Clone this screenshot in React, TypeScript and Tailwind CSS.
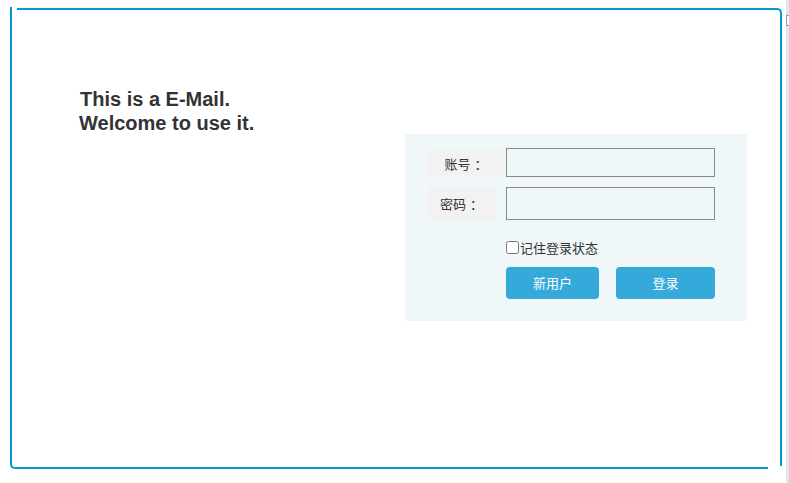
import { useState } from 'react';

// Login page: welcome text on the left, login panel on the right
export default function App() {
    const [remember, setRemember] = useState(false);
    const [account, setAccount] = useState('');
    const [password, setPassword] = useState('');

    return (
        <div className="flex w-[789px] h-[483px] bg-white font-['Liberation_Sans','Noto_Sans_CJK_SC',sans-serif] text-[#333]">
            <div className="relative w-[786px] h-[483px]">
                {/* frame lines (two offset halves) */}
                <div className="pointer-events-none absolute left-[10px] top-[7px] w-[758px] h-[462px] border-l-2 border-b-2 border-[#0599ce] rounded-bl-[5px]" />
                <div className="pointer-events-none absolute left-[17px] top-[8px] w-[765px] h-[458px] border-t-2 border-r-2 border-[#0599ce] rounded-tr-[5px]" />

                <div className="pt-[87px]">
                    <h1 className="h-[47px] pl-[79px] text-[20px] leading-[24px] font-bold">
                        <span className="pl-[1px]">This is a E-Mail.</span>
                        <br />
                        Welcome to use it.
                    </h1>

                    {/* login panel */}
                    <div className="ml-[405px] w-[342px] h-[187px] bg-[#eff7f9] pt-[14px] pl-[22px] text-[13px] font-['Noto_Sans_CJK_SC',sans-serif]">
                        <div className="flex items-end">
                            <label className="flex items-center justify-center w-[78px] h-[27px] bg-[#f2f2f2]">
                                账号<span className="ml-[4px]">：</span>
                            </label>
                            <input
                                value={account}
                                onChange={(e) => setAccount(e.target.value)}
                                className="ml-[1px] w-[209px] h-[29px] border border-[#888] bg-[#eff7f9] outline-none px-1"
                            />
                        </div>
                        <div className="flex items-end mt-[10px]">
                            <label className="flex items-center justify-center w-[69px] h-[33px] bg-[#f2f2f2]">
                                密码<span className="ml-[4px]">：</span>
                            </label>
                            <input
                                type="password"
                                value={password}
                                onChange={(e) => setPassword(e.target.value)}
                                className="ml-[10px] w-[209px] h-[33px] border border-[#888] bg-[#eff7f9] outline-none px-1"
                            />
                        </div>

                        <label className="flex items-center ml-[79px] mt-[21px] h-[13px] leading-[13px]">
                            <input
                                type="checkbox"
                                checked={remember}
                                onChange={(e) => setRemember(e.target.checked)}
                                className="m-0 mr-[1px] w-[13px] h-[13px]"
                            />
                            记住登录状态
                        </label>

                        <div className="flex ml-[79px] mt-[13px] gap-[17px] text-white">
                            <button className="w-[93px] h-[32px] pb-[1px] rounded-[4px] bg-[#35a9da]">新用户</button>
                            <button className="w-[99px] h-[32px] pb-[1px] rounded-[4px] bg-[#35a9da]">登录</button>
                        </div>
                    </div>
                </div>
            </div>

            {/* cut-off sidebar edge */}
            <div className="w-[3px] h-[483px] bg-[#e6e6e6] pt-[15px]">
                <div className="w-[3px] h-[11px] border-l border-y border-[#999] bg-white" />
            </div>
        </div>
    );
}
